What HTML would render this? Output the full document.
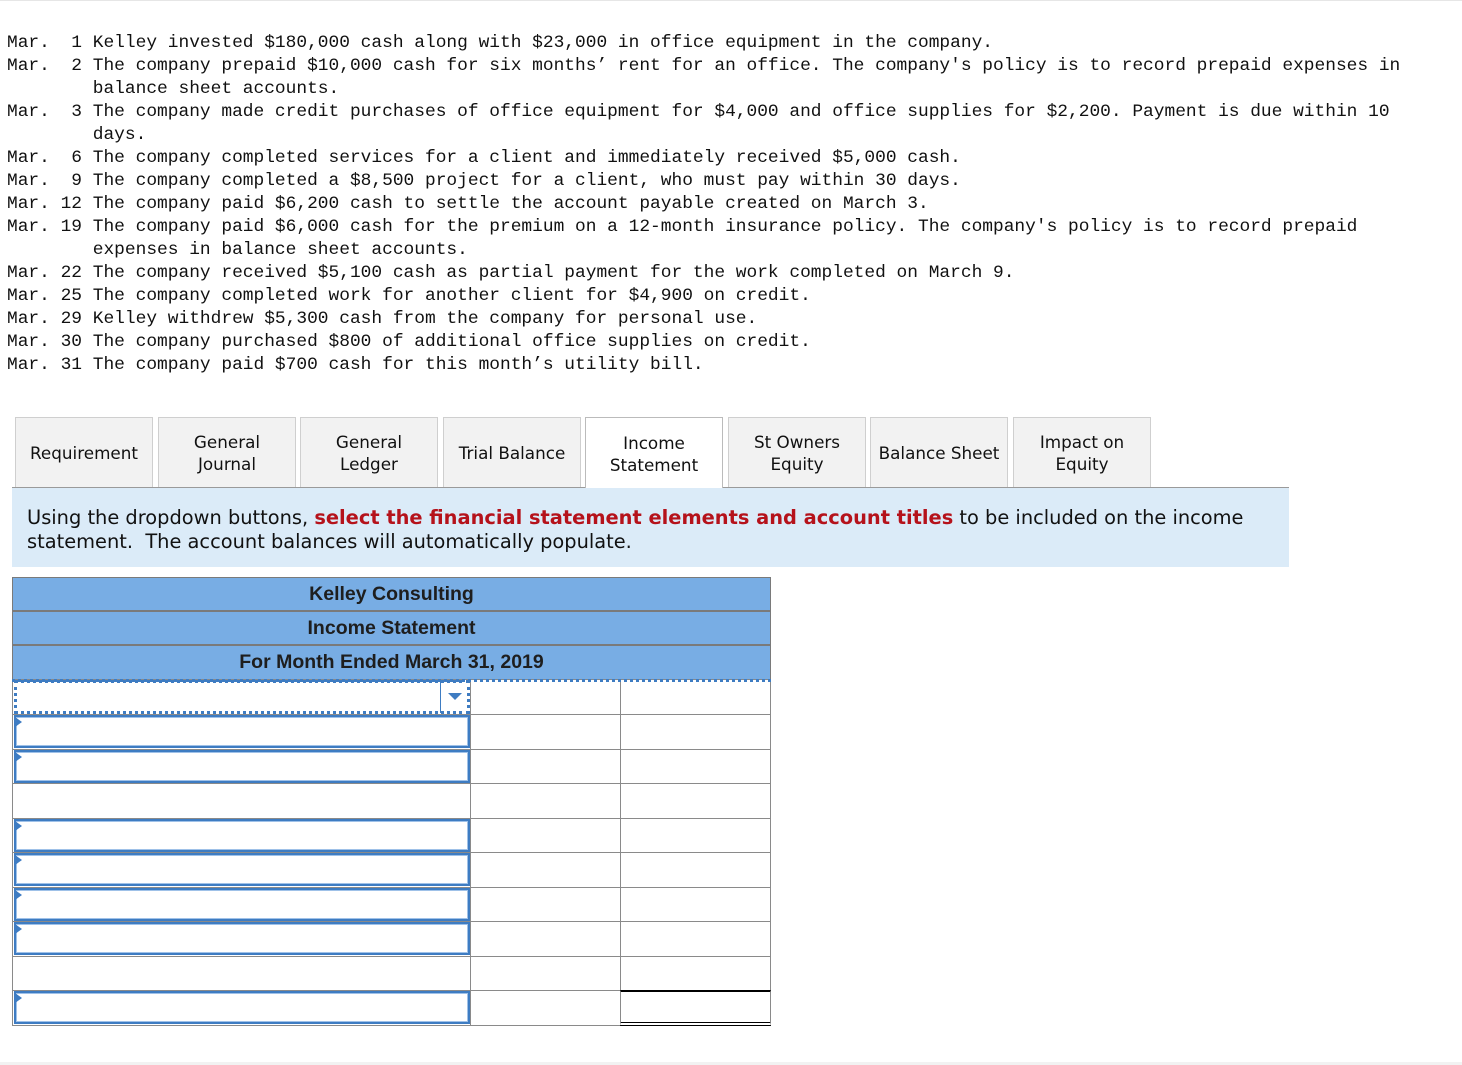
<!DOCTYPE html>
<html><head><meta charset="utf-8">
<style>
body{margin:0;background:#fff;width:1462px;height:1065px;position:relative;overflow:hidden;}
.top{position:absolute;left:0;top:0;width:1462px;height:1px;background:#e6e6e6;}
pre{position:absolute;left:7px;top:32px;margin:0;font-family:"Liberation Mono",monospace;font-size:17.88px;line-height:23px;color:#111;}
.tab{position:absolute;top:417px;height:70px;width:138px;background:#f2f2f2;border:1px solid #cfcfcf;border-bottom:none;box-sizing:border-box;display:flex;align-items:center;justify-content:center;text-align:center;font-family:"DejaVu Sans",sans-serif;font-size:16.8px;line-height:22px;color:#111;}
.tab.act{background:#fff;border-color:#bbb;height:72px;}
.bar{position:absolute;left:12px;top:487px;width:1277px;height:1px;background:#9a9a9a;}
.info{position:absolute;left:12px;top:488px;width:1277px;height:79px;background:#dbebf8;box-sizing:border-box;padding:18px 0 0 15px;font-family:"DejaVu Sans",sans-serif;font-size:19.4px;line-height:24px;color:#111;white-space:nowrap;}
.info b{color:#b5121b;}
.hdr{position:absolute;left:12px;width:759px;height:34px;background:#78ade4;border:1px solid #7a7a7a;box-sizing:border-box;text-align:center;font-family:"Liberation Sans",Arial,sans-serif;font-weight:bold;font-size:19.5px;line-height:32px;color:#1e1e1e;}
.cell{position:absolute;border:1px solid #8a8a8a;box-sizing:border-box;background:#fff;}
.inp{position:absolute;left:14px;width:456px;height:33px;border:2px solid #3e7cc2;box-sizing:border-box;box-shadow:inset 0 0 0 1px #9fc1e8;background:#fff;}
.inp:before{content:"";position:absolute;left:-1px;top:0px;border-left:7px solid #3e7cc2;border-top:5px solid transparent;border-bottom:5px solid transparent;}
</style></head><body>
<div class="top"></div>
<pre>Mar.  1 Kelley invested $180,000 cash along with $23,000 in office equipment in the company.
Mar.  2 The company prepaid $10,000 cash for six months’ rent for an office. The company's policy is to record prepaid expenses in
        balance sheet accounts.
Mar.  3 The company made credit purchases of office equipment for $4,000 and office supplies for $2,200. Payment is due within 10
        days.
Mar.  6 The company completed services for a client and immediately received $5,000 cash.
Mar.  9 The company completed a $8,500 project for a client, who must pay within 30 days.
Mar. 12 The company paid $6,200 cash to settle the account payable created on March 3.
Mar. 19 The company paid $6,000 cash for the premium on a 12-month insurance policy. The company's policy is to record prepaid
        expenses in balance sheet accounts.
Mar. 22 The company received $5,100 cash as partial payment for the work completed on March 9.
Mar. 25 The company completed work for another client for $4,900 on credit.
Mar. 29 Kelley withdrew $5,300 cash from the company for personal use.
Mar. 30 The company purchased $800 of additional office supplies on credit.
Mar. 31 The company paid $700 cash for this month’s utility bill.</pre>

<div class="tab" style="left:15px">Requirement</div>
<div class="tab" style="left:158px">General<br>Journal</div>
<div class="tab" style="left:300px">General<br>Ledger</div>
<div class="tab" style="left:443px">Trial Balance</div>
<div class="bar"></div>
<div class="tab act" style="left:585px">Income<br>Statement</div>
<div class="tab" style="left:728px">St Owners<br>Equity</div>
<div class="tab" style="left:870px">Balance Sheet</div>
<div class="tab" style="left:1013px">Impact on<br>Equity</div>
<div class="info">Using the dropdown buttons, <b>select the financial statement elements and account titles</b> to be included on the income<br>statement.&nbsp; The account balances will automatically populate.</div>

<div class="hdr" style="top:577px">Kelley Consulting</div>
<div class="hdr" style="top:611px">Income Statement</div>
<div class="hdr" style="top:645px;height:35px">For Month Ended March 31, 2019</div>

<div class="cell" style="left:12px;top:679px;width:459px;height:36px"></div><div class="cell" style="left:470px;top:679px;width:151px;height:36px"></div><div class="cell" style="left:620px;top:679px;width:151px;height:36px"></div>
<div class="cell" style="left:12px;top:714px;width:459px;height:36px"></div><div class="cell" style="left:470px;top:714px;width:151px;height:36px"></div><div class="cell" style="left:620px;top:714px;width:151px;height:36px"></div>
<div class="cell" style="left:12px;top:749px;width:459px;height:35px"></div><div class="cell" style="left:470px;top:749px;width:151px;height:35px"></div><div class="cell" style="left:620px;top:749px;width:151px;height:35px"></div>
<div class="cell" style="left:12px;top:783px;width:459px;height:36px"></div><div class="cell" style="left:470px;top:783px;width:151px;height:36px"></div><div class="cell" style="left:620px;top:783px;width:151px;height:36px"></div>
<div class="cell" style="left:12px;top:818px;width:459px;height:35px"></div><div class="cell" style="left:470px;top:818px;width:151px;height:35px"></div><div class="cell" style="left:620px;top:818px;width:151px;height:35px"></div>
<div class="cell" style="left:12px;top:852px;width:459px;height:36px"></div><div class="cell" style="left:470px;top:852px;width:151px;height:36px"></div><div class="cell" style="left:620px;top:852px;width:151px;height:36px"></div>
<div class="cell" style="left:12px;top:887px;width:459px;height:35px"></div><div class="cell" style="left:470px;top:887px;width:151px;height:35px"></div><div class="cell" style="left:620px;top:887px;width:151px;height:35px"></div>
<div class="cell" style="left:12px;top:921px;width:459px;height:36px"></div><div class="cell" style="left:470px;top:921px;width:151px;height:36px"></div><div class="cell" style="left:620px;top:921px;width:151px;height:36px"></div>
<div class="cell" style="left:12px;top:956px;width:459px;height:35px"></div><div class="cell" style="left:470px;top:956px;width:151px;height:35px"></div><div class="cell" style="left:620px;top:956px;width:151px;height:35px"></div>
<div class="cell" style="left:12px;top:990px;width:459px;height:36px"></div><div class="cell" style="left:470px;top:990px;width:151px;height:36px"></div><div class="cell" style="left:620px;top:990px;width:151px;height:36px;border-top:2px solid #000;border-bottom:4px double #000"></div>

<div style="position:absolute;left:14px;top:680px;width:456px;height:34px;border:3px dotted #3e7cc2;box-sizing:border-box;background:#fff;"></div>
<div style="position:absolute;left:440px;top:681px;width:1px;height:32px;background:#3e7cc2;"></div>
<div style="position:absolute;left:448px;top:693px;border-top:7px solid #3e7cc2;border-left:7px solid transparent;border-right:7px solid transparent;"></div>
<div style="position:absolute;left:12px;top:679px;width:759px;height:3px;border-top:3px dotted #3e7cc2;box-sizing:border-box"></div>

<div class="inp" style="top:715px"></div>
<div class="inp" style="top:750px"></div>
<div class="inp" style="top:819px"></div>
<div class="inp" style="top:853px"></div>
<div class="inp" style="top:888px"></div>
<div class="inp" style="top:922px"></div>
<div class="inp" style="top:991px"></div>

<div style="position:absolute;left:0;top:1062px;width:1462px;height:3px;background:#f2f2f2"></div>
</body></html>
